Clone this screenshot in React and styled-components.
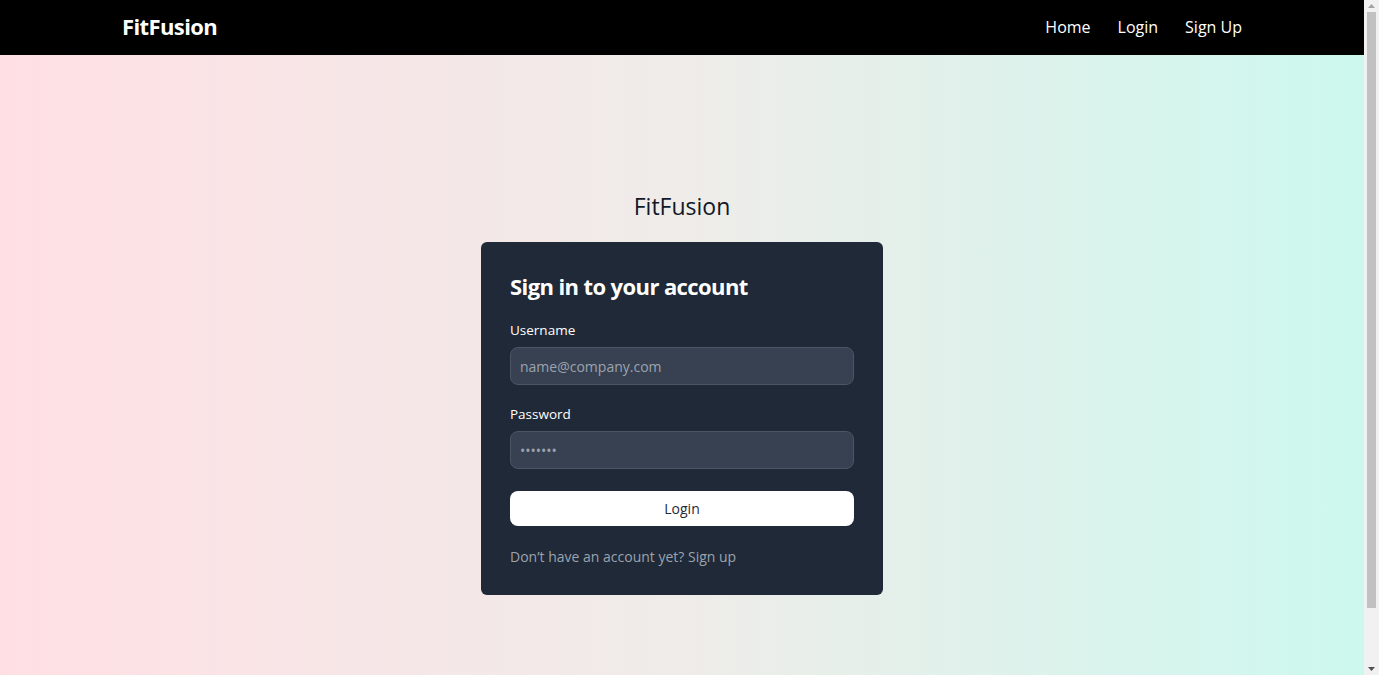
import React from "react";
import styled, { createGlobalStyle } from "styled-components";

const Global = createGlobalStyle`
  html, body { margin: 0; padding: 0; }
  body {
    font-family: "Open Sans", "Liberation Sans", sans-serif;
    background: #ccf7ed;
  }
  * { box-sizing: border-box; }
`;

const Page = styled.div`
  min-height: 737px;
  margin-right: 15px;
  display: flex;
  flex-direction: column;
  background: linear-gradient(90deg, #ffdfe4 0%, #efece9 50%, #ccf8ee 100%);
`;

const ScrollBar = styled.div`
  position: fixed;
  top: 0;
  right: 0;
  bottom: 0;
  width: 15px;
  background: #f1f1f1;
  display: flex;
  flex-direction: column;
  align-items: center;
`;

const ScrollArrow = styled.div`
  height: 12px;
  width: 100%;
  display: flex;
  align-items: center;
  justify-content: center;
  flex-shrink: 0;
`;

const ScrollThumb = styled.div`
  width: 9px;
  height: 596px;
  background: #c1c1c1;
`;

const Spacer = styled.div`
  flex: 1;
`;

const NavBar = styled.nav`
  background: #000;
  height: 55px;
  flex-shrink: 0;
`;

const NavInner = styled.div`
  max-width: 1120px;
  height: 100%;
  margin: 0 auto;
  display: flex;
  align-items: center;
  justify-content: space-between;
`;

const Brand = styled.a`
  color: #fff;
  font-size: 22px;
  font-weight: 700;
  letter-spacing: -0.6px;
  text-decoration: none;
  margin-top: -3px;
`;

const Links = styled.div`
  display: flex;
  gap: 27px;
  margin-top: -2px;
`;

const NavLink = styled.a`
  color: #fff;
  font-size: 16px;
  font-weight: 500;
  text-decoration: none;
`;

const Main = styled.main`
  flex: 1;
  display: flex;
  flex-direction: column;
  align-items: center;
  padding-top: 135px;
`;

const Title = styled.h1`
  margin: 0 0 20px;
  font-size: 23px;
  font-weight: 500;
  color: #111827;
  line-height: 32px;
`;

const Card = styled.div`
  width: 402px;
  background: #1f2937;
  border-radius: 6px;
  padding: 29px;
  display: flex;
  flex-direction: column;
`;

const Heading = styled.h2`
  margin: 0 0 20px;
  color: #fff;
  font-size: 22px;
  font-weight: 700;
  letter-spacing: -0.6px;
  line-height: 30px;
`;

const Field = styled.div`
  display: flex;
  flex-direction: column;
  margin-bottom: ${(p) => p.$mb || 20}px;
`;

const Label = styled.label`
  color: #fff;
  font-size: 13.5px;
  font-weight: 500;
  margin-bottom: 8px;
  line-height: 18px;
`;

const Input = styled.input`
  height: 38px;
  width: 100%;
  background: #374151;
  border: 1px solid #4b5563;
  border-radius: 8px;
  padding: 0 9px;
  color: #fff;
  font-family: inherit;
  font-size: 14px;
  outline: none;
  &::placeholder { color: #9ca3af; }
`;

const Button = styled.button`
  height: 35px;
  width: 100%;
  background: #fff;
  border: none;
  border-radius: 8px;
  color: #1f2937;
  font-family: inherit;
  font-size: 14px;
  font-weight: 500;
  cursor: pointer;
`;

const Footer = styled.p`
  margin: 22px 0 0;
  color: #9ca3af;
  font-size: 14px;
  line-height: 18px;
`;

const FooterLink = styled.a`
  color: #9ca3af;
  text-decoration: none;
`;

const Arrow = ({ up }) => (
  <svg width="7" height="4" viewBox="0 0 7 4">
    <path d={up ? "M3.5 0 L7 4 L0 4 Z" : "M0 0 L7 0 L3.5 4 Z"} fill={up ? "#a3a3a3" : "#505050"} />
  </svg>
);

export default function App() {
  return (
    <>
      <Global />
      <Page>
        <NavBar>
          <NavInner>
            <Brand href="#">FitFusion</Brand>
            <Links>
              <NavLink href="#">Home</NavLink>
              <NavLink href="#">Login</NavLink>
              <NavLink href="#">Sign Up</NavLink>
            </Links>
          </NavInner>
        </NavBar>
        <Main>
          <Title>FitFusion</Title>
          <Card>
            <Heading>Sign in to your account</Heading>
            <Field>
              <Label>Username</Label>
              <Input placeholder="name@company.com" />
            </Field>
            <Field $mb={22}>
              <Label>Password</Label>
              <Input type="password" placeholder="•••••••" />
            </Field>
            <Button>Login</Button>
            <Footer>
              Don’t have an account yet? <FooterLink href="#">Sign up</FooterLink>
            </Footer>
          </Card>
        </Main>
      </Page>
      <ScrollBar aria-hidden="true">
        <ScrollArrow><Arrow up /></ScrollArrow>
        <ScrollThumb />
        <Spacer />
        <ScrollArrow><Arrow /></ScrollArrow>
      </ScrollBar>
    </>
  );
}
